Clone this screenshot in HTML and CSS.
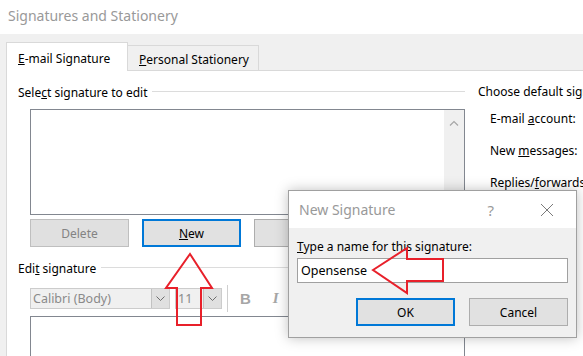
FILE: index.html
```html
<!DOCTYPE html>
<html lang="en">
<head>
  <meta charset="UTF-8">
  <title>Signatures and Stationery</title>
  <link rel="stylesheet" href="styles.css">
</head>
<body>
  <div class="titlebar">Signatures and Stationery</div>

  <div class="client">
    <div class="tabs">
      <div class="tab tab-active"><u>E</u>-mail Signature</div>
      <div class="tab"><u>P</u>ersonal Stationery</div>
    </div>

    <div class="panel">
      <div class="left">
        <div class="group"><span>Sele<u>c</u>t signature to edit</span></div>
        <div class="listbox">
          <div class="scrollbar">
            <svg width="10" height="6" viewBox="0 0 10 6"><path d="M1 5.5 L5 1.5 L9 5.5" fill="none" stroke="#a6a6a6" stroke-width="1.2"/></svg>
          </div>
        </div>
        <div class="btn-row">
          <button class="btn btn-disabled">Delete</button>
          <button class="btn btn-default"><u>N</u>ew</button>
          <button class="btn">Save</button>
        </div>

        <div class="group group-second"><span>Edi<u>t</u> signature</span></div>
        <div class="toolbar">
          <div class="combo combo-font">
            <span class="combo-text">Calibri (Body)</span>
            <span class="combo-drop"><svg width="9" height="5" viewBox="0 0 9 5"><path d="M0.5 0.5 L4.5 4.5 L8.5 0.5" fill="none" stroke="#6d6d6d"/></svg></span>
          </div>
          <div class="combo combo-size">
            <span class="combo-text">11</span>
            <span class="combo-drop"><svg width="9" height="5" viewBox="0 0 9 5"><path d="M0.5 0.5 L4.5 4.5 L8.5 0.5" fill="none" stroke="#6d6d6d"/></svg></span>
          </div>
          <div class="sep"></div>
          <span class="tool tool-bold">B</span>
          <span class="tool tool-italic">I</span>
        </div>
        <div class="editor"></div>
      </div>

      <div class="right">
        <div class="right-title">Choose default signature</div>
        <div class="right-item">E-mail <u>a</u>ccount:</div>
        <div class="right-item">New <u>m</u>essages:</div>
        <div class="right-item">Replies/<u>f</u>orwards:</div>
      </div>
    </div>
  </div>

  <!-- диалог поверх окна -->
  <div class="dialog">
    <div class="dialog-title">
      <span class="dialog-caption">New Signature</span>
      <span class="dialog-help">?</span>
      <svg class="dialog-close" width="14" height="14" viewBox="0 0 14 14"><path d="M1 1 L13 13 M13 1 L1 13" stroke="#7a7a7a" stroke-width="1"/></svg>
    </div>
    <div class="dialog-body">
      <div class="dialog-label"><u>T</u>ype a name for this signature:</div>
      <div class="dialog-input">Opensense</div>
      <div class="dialog-buttons">
        <button class="btn btn-default">OK</button>
        <button class="btn">Cancel</button>
      </div>
    </div>
  </div>

  <!-- красные стрелки -->
  <svg class="arrows" width="583" height="356" viewBox="0 0 583 356">
    <polygon points="190,254 212,288 201,288 201,325 177,325 177,288 166,288" fill="none" stroke="#e8202a" stroke-width="2"/>
    <polygon points="373,270 407,248 407,259 443,259 443,281 407,281 407,293" fill="none" stroke="#e8202a" stroke-width="2"/>
  </svg>
</body>
</html>
```

FILE: styles.css
```css
body {
  margin: 0;
  width: 583px;
  height: 356px;
  overflow: hidden;
  position: relative;
  font-family: "Noto Sans", sans-serif;
  font-size: 12px;
  color: #000;
  background: #f0f0f0;
}

button {
  font-family: inherit;
  font-size: 12px;
}

/* Заголовок окна */
.titlebar {
  height: 34px;
  background: #fff;
  color: #999;
  font-size: 14px;
  line-height: 32px;
  padding-left: 8px;
}

.client {
  padding: 9px 0 0 6px;
}

/* Вкладки */
.tabs {
  display: flex;
  align-items: flex-end;
  height: 27px;
}

.tab {
  height: 24px;
  line-height: 28px;
  padding: 0 11px;
  border: 1px solid #d9d9d9;
  border-bottom: none;
  background: #f0f0f0;
  white-space: nowrap;
}

.tab-active {
  width: 98px;
  height: 28px;
  line-height: 32px;
  background: #fff;
  position: relative;
  z-index: 1;
  margin-bottom: -1px;
}

.tab:not(.tab-active) {
  border-left: none;
  width: 108px;
}

.panel {
  display: flex;
  background: #fff;
  border-top: 1px solid #d9d9d9;
  border-left: 1px solid #d9d9d9;
  height: 285px;
  width: 565px;
  padding-left: 11px;
  overflow: hidden;
}

.left {
  width: 447px;
  flex-shrink: 0;
}

/* Группа с линией */
.group {
  display: flex;
  align-items: center;
  margin-top: 13px;
  height: 16px;
  white-space: nowrap;
}

.group::after {
  content: "";
  flex: 1;
  height: 1px;
  background: #dcdcdc;
  margin-left: 5px;
  margin-top: -1px;
}

.listbox {
  margin: 9px 0 0 12px;
  height: 104px;
  border: 1px solid #828790;
  display: flex;
  justify-content: flex-end;
}

.scrollbar {
  width: 20px;
  background: #f0f0f0;
  display: flex;
  justify-content: center;
  padding-top: 10px;
}

.btn-row {
  display: flex;
  gap: 13px;
  margin: 4px 0 0 12px;
}

.btn {
  width: 99px;
  height: 28px;
  background: #e1e1e1;
  border: 1px solid #adadad;
  padding: 0;
  color: #000;
}

.btn-disabled {
  background: #e0e0e0;
  border-color: #bfbfbf;
  color: #838383;
}

.btn-default {
  border: 2px solid #0078d7;
}

/* Панель инструментов */
.toolbar {
  display: flex;
  align-items: center;
  margin: 11px 0 0 12px;
  height: 22px;
}

.combo {
  display: flex;
  height: 21px;
  border: 1px solid #cccccc;
  background: #f0f0f0;
  box-sizing: border-box;
  color: #8a8a8a;
  font-size: 12.5px;
}

.combo-font {
  width: 140px;
}

.combo-size {
  width: 47px;
  margin-left: 5px;
}

.combo-text {
  flex: 1;
  line-height: 19px;
  padding-left: 2px;
}

.combo-drop {
  width: 17px;
  background: #e0e0e0;
  border-left: 1px solid #c2c2c2;
  display: flex;
  align-items: center;
  justify-content: center;
}

.sep {
  width: 1px;
  height: 27px;
  background: #cfcfcf;
  margin-left: 5px;
}

.tool {
  color: #a6a6a6;
  font-size: 15px;
  font-weight: bold;
}

.tool-bold {
  margin-left: 12px;
  font-family: "Liberation Sans", sans-serif;
}

.tool-italic {
  margin-left: 22px;
  font-family: "Liberation Serif", serif;
  font-style: italic;
}

.editor {
  margin: 7px 0 0 12px;
  height: 60px;
  border: 1px solid #828790;
}

/* Правая колонка */
.right {
  margin-left: 13px;
  white-space: nowrap;
}

.right-title {
  margin-top: 13px;
  height: 16px;
  line-height: 16px;
}

.right-item {
  margin-left: 12px;
  height: 16px;
  line-height: 16px;
  margin-top: 11px;
}

.right-item + .right-item {
  margin-top: 16px;
}

/* Диалог */
.dialog {
  position: absolute;
  left: 288px;
  top: 190px;
  width: 287px;
  height: 146px;
  border: 1px solid #a0a0a0;
  background: #f0f0f0;
  box-shadow: 0 0 12px rgba(0, 0, 0, 0.25);
  z-index: 5;
}

.dialog-title {
  display: flex;
  align-items: center;
  height: 37px;
  background: #fff;
  padding-left: 10px;
}

.dialog-caption {
  color: #999;
  font-size: 14px;
  flex: 1;
}

.dialog-help {
  color: #9a9a9a;
  font-size: 15px;
  margin-right: 46px;
}

.dialog-close {
  margin-right: 22px;
}

.dialog-body {
  padding: 11px 8px 0 8px;
}

.dialog-label {
  height: 16px;
  line-height: 16px;
}

.dialog-input {
  margin-top: 3px;
  height: 23px;
  line-height: 23px;
  border: 1px solid #a0a0a0;
  background: #fff;
  padding-left: 3px;
  font-size: 12.5px;
}

.dialog-buttons {
  display: flex;
  justify-content: flex-end;
  gap: 14px;
  margin-top: 15px;
}

.arrows {
  position: absolute;
  left: 0;
  top: 0;
  z-index: 10;
  pointer-events: none;
}
```
